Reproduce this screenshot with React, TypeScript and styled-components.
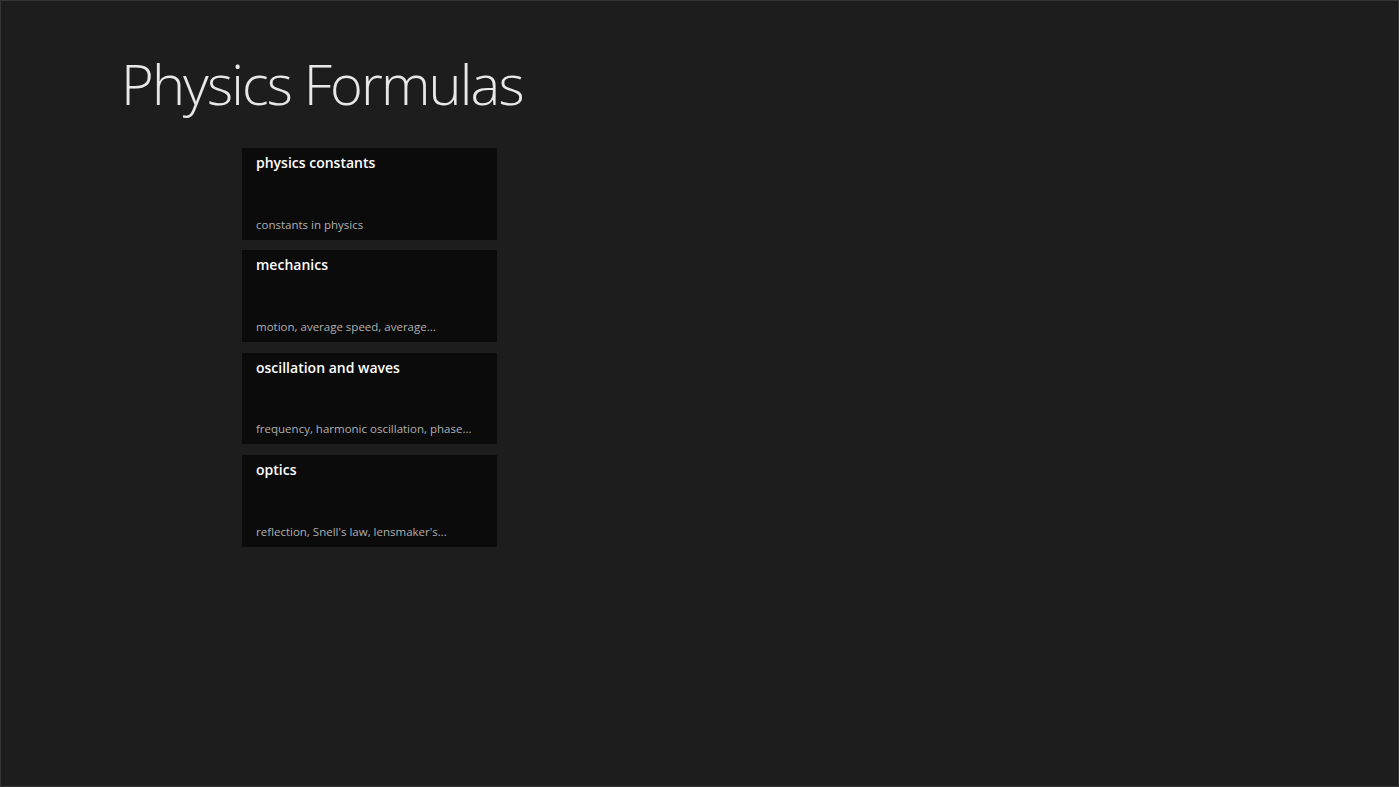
import styled, { createGlobalStyle } from "styled-components";

const GlobalStyle = createGlobalStyle`
  html, body {
    margin: 0;
    padding: 0;
    background-color: #1d1d1d;
  }
  * {
    box-sizing: border-box;
  }
`;

const Page = styled.div`
  width: 100vw;
  height: 100vh;
  background-color: #1d1d1d;
  border: 1px solid #353535;
  font-family: "Segoe UI", "Open Sans", "Noto Sans", sans-serif;
  color: #ffffff;
  padding: 42px 0 0 120px;
  overflow: hidden;
`;

const Title = styled.h1`
  margin: 0;
  font-family: "Segoe UI Light", "Open Sans", "Noto Sans", sans-serif;
  font-size: 56px;
  font-weight: 300;
  line-height: 80px;
  color: #e8e8e8;
  letter-spacing: -1.85px;
`;

const TileList = styled.ul`
  list-style: none;
  margin: 25px 0 0 121px;
  padding: 0;
  display: flex;
  flex-direction: column;
  gap: 10.5px;
`;

const Tile = styled.li`
  width: 255px;
  height: 91.8px;
  background-color: #0b0b0b;
  padding: 4px 14px 6px 14px;
  display: flex;
  flex-direction: column;
  justify-content: space-between;
`;

const TileTitle = styled.span`
  font-size: 14px;
  font-weight: 600;
  color: #ffffff;
  line-height: 22px;
`;

const TileSubtitle = styled.span`
  font-size: 11.5px;
  color: #b0b0b0;
  line-height: 18px;
  white-space: nowrap;
  overflow: hidden;
`;

const groups = [
  { title: "physics constants", subtitle: "constants in physics" },
  { title: "mechanics", subtitle: "motion, average speed, average..." },
  {
    title: "oscillation and waves",
    subtitle: "frequency, harmonic oscillation, phase...",
  },
  { title: "optics", subtitle: "reflection, Snell's law, lensmaker's..." },
];

export default function App() {
  return (
    <>
      <GlobalStyle />
      <Page>
        <Title>Physics Formulas</Title>
        <TileList>
          {groups.map((group) => (
            <Tile key={group.title}>
              <TileTitle>{group.title}</TileTitle>
              <TileSubtitle>{group.subtitle}</TileSubtitle>
            </Tile>
          ))}
        </TileList>
      </Page>
    </>
  );
}
